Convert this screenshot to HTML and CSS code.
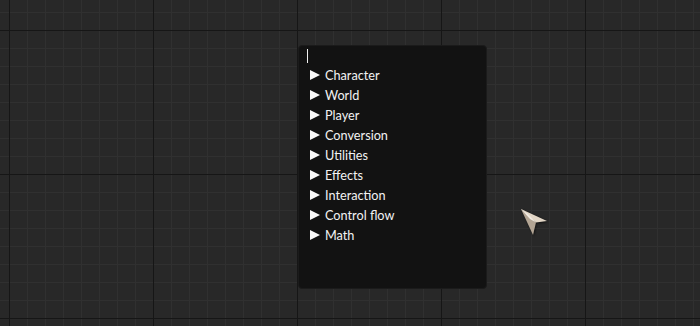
FILE: index.html
```html
<!DOCTYPE html>
<html>
<head>
<meta charset="utf-8">
<link rel="stylesheet" href="styles.css">
</head>
<body>
<div class="canvas">
  <div class="menu">
    <div class="search"><span class="caret"></span></div>
    <ul class="list">
      <li class="item"><span class="tri"></span><span class="label">Character</span></li>
      <li class="item"><span class="tri"></span><span class="label">World</span></li>
      <li class="item"><span class="tri"></span><span class="label">Player</span></li>
      <li class="item"><span class="tri"></span><span class="label">Conversion</span></li>
      <li class="item"><span class="tri"></span><span class="label">Utilities</span></li>
      <li class="item"><span class="tri"></span><span class="label">Effects</span></li>
      <li class="item"><span class="tri"></span><span class="label">Interaction</span></li>
      <li class="item"><span class="tri"></span><span class="label">Control flow</span></li>
      <li class="item"><span class="tri"></span><span class="label">Math</span></li>
    </ul>
  </div>
  <svg class="pointer" width="34" height="34" viewBox="0 0 34 34">
    <defs>
      <filter id="sh" x="-30%" y="-30%" width="160%" height="160%">
        <feGaussianBlur stdDeviation="1"/>
      </filter>
    </defs>
    <polygon points="6,5 32,17 20,18 18,31" fill="#000" opacity="0.7" filter="url(#sh)"/>
    <polygon points="5,4 31,16 20,17.5" fill="#e2d6c6"/>
    <polygon points="5,4 20,17.5 17,30" fill="#b3a594"/>
    <polygon points="5,4 12,9 20,17.5 14,14" fill="#f2ebe2"/>
  </svg>
</div>
</body>
</html>
```
FILE: styles.css
```css
html, body {
  margin: 0;
  padding: 0;
}
body {
  width: 700px;
  height: 326px;
  overflow: hidden;
  background-color: #282828;
  font-family: Lato, "Noto Sans", sans-serif;
}
.canvas {
  position: relative;
  width: 700px;
  height: 326px;
  background-image:
    linear-gradient(to right, #161616 1px, transparent 1px),
    linear-gradient(to bottom, #161616 1px, transparent 1px),
    linear-gradient(to right, #303030 1px, transparent 1px),
    linear-gradient(to bottom, #303030 1px, transparent 1px);
  background-size: 144px 144px, 144px 144px, 18px 18px, 18px 18px;
  background-position: 9px 30px, 9px 30px, 9px 12px, 9px 12px;
}
.menu {
  position: absolute;
  left: 298px;
  top: 45px;
  width: 189px;
  height: 244px;
  box-sizing: border-box;
  background: #121212;
  border: 1px solid #1b1b1b;
  border-radius: 4px;
  padding: 2px 0 0 8px;
}
.search {
  height: 17px;
  display: flex;
  align-items: flex-start;
}
.caret {
  display: block;
  width: 1px;
  height: 14px;
  margin-top: 1px;
  background: #f0f0f0;
}
.list {
  list-style: none;
  margin: 0;
  padding: 0;
}
.item {
  height: 20px;
  display: flex;
  align-items: center;
  color: #f2f2f2;
  font-size: 12.7px;
}
.tri {
  width: 0;
  height: 0;
  margin-left: 3px;
  margin-right: 5px;
  border-top: 5px solid transparent;
  border-bottom: 5px solid transparent;
  border-left: 10px solid #f8f8f8;
}
.label {
  line-height: 20px;
}
.pointer {
  position: absolute;
  left: 516px;
  top: 205px;
}
```
